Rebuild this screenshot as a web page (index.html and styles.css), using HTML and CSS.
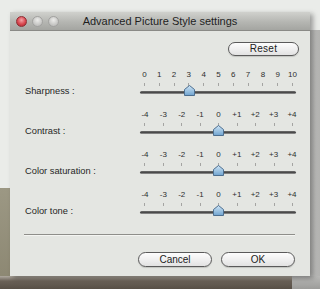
FILE: index.html
```html
<!DOCTYPE html>
<html>
<head>
<meta charset="utf-8">
<title>Advanced Picture Style settings</title>
<link rel="stylesheet" href="styles.css">
</head>
<body>
<div class="scene">
  <div class="window">
    <div class="titlebar">
      <div class="lights"><span class="light red"></span><span class="light"></span><span class="light"></span></div>
      <div class="title">Advanced Picture Style settings</div>
      <div></div>
    </div>
    <div class="top-row"><button class="btn reset">Reset</button></div>
    <div class="rows">
      <div class="row">
        <div class="label">Sharpness :</div>
        <div class="slider">
          <div class="nums"><span>0</span><span>1</span><span>2</span><span>3</span><span>4</span><span>5</span><span>6</span><span>7</span><span>8</span><span>9</span><span>10</span></div>
          <div class="ticks"><i></i><i></i><i></i><i></i><i></i><i></i><i></i><i></i><i></i><i></i><i></i></div>
          <div class="track"></div>
          <svg class="thumb" style="left:46.6px" viewBox="0 0 11 11"><defs><linearGradient id="g1" x1="0" y1="0" x2="0" y2="1"><stop offset="0" stop-color="#cfe6f6"/><stop offset="1" stop-color="#6fa3cf"/></linearGradient></defs><polygon points="5.5,0.5 10.5,4.5 10.5,10.5 0.5,10.5 0.5,4.5" fill="url(#g1)" stroke="#4d6f90" stroke-width="1"/></svg>
        </div>
      </div>
      <div class="row">
        <div class="label">Contrast :</div>
        <div class="slider">
          <div class="nums"><span>-4</span><span>-3</span><span>-2</span><span>-1</span><span>0</span><span>+1</span><span>+2</span><span>+3</span><span>+4</span></div>
          <div class="ticks"><i></i><i></i><i></i><i></i><i></i><i></i><i></i><i></i><i></i></div>
          <div class="track"></div>
          <svg class="thumb" style="left:76px" viewBox="0 0 11 11"><polygon points="5.5,0.5 10.5,4.5 10.5,10.5 0.5,10.5 0.5,4.5" fill="url(#g1)" stroke="#4d6f90" stroke-width="1"/></svg>
        </div>
      </div>
      <div class="row">
        <div class="label">Color saturation :</div>
        <div class="slider">
          <div class="nums"><span>-4</span><span>-3</span><span>-2</span><span>-1</span><span>0</span><span>+1</span><span>+2</span><span>+3</span><span>+4</span></div>
          <div class="ticks"><i></i><i></i><i></i><i></i><i></i><i></i><i></i><i></i><i></i></div>
          <div class="track"></div>
          <svg class="thumb" style="left:76px" viewBox="0 0 11 11"><polygon points="5.5,0.5 10.5,4.5 10.5,10.5 0.5,10.5 0.5,4.5" fill="url(#g1)" stroke="#4d6f90" stroke-width="1"/></svg>
        </div>
      </div>
      <div class="row">
        <div class="label">Color tone :</div>
        <div class="slider">
          <div class="nums"><span>-4</span><span>-3</span><span>-2</span><span>-1</span><span>0</span><span>+1</span><span>+2</span><span>+3</span><span>+4</span></div>
          <div class="ticks"><i></i><i></i><i></i><i></i><i></i><i></i><i></i><i></i><i></i></div>
          <div class="track"></div>
          <svg class="thumb" style="left:75.5px" viewBox="0 0 11 11"><polygon points="5.5,0.5 10.5,4.5 10.5,10.5 0.5,10.5 0.5,4.5" fill="url(#g1)" stroke="#4d6f90" stroke-width="1"/></svg>
        </div>
      </div>
    </div>
    <div class="sep"></div>
    <div class="actions"><button class="btn">Cancel</button><button class="btn">OK</button></div>
  </div>
</div>
</body>
</html>
```

FILE: styles.css
```css
html, body {
  margin: 0;
  padding: 0;
}
body {
  width: 320px;
  height: 289px;
  overflow: hidden;
  font-family: "Liberation Sans", Arial, sans-serif;
}
.scene {
  box-sizing: border-box;
  width: 320px;
  height: 289px;
  padding: 12px 0 0 10px;
  background:
    linear-gradient(#b0aaa0, #6a6157 5px, #574f46) 0 276px / 292px 13px no-repeat,
    linear-gradient(#b9b9b7, #9c9c9a) 292px 276px / 28px 13px no-repeat,
    linear-gradient(#9c9884, #8b8671) 0 188px / 10px 101px no-repeat,
    linear-gradient(to right, #c4c4c2, #b2b2b0) 310px 30px / 10px 259px no-repeat,
    #eaece9;
}
.window {
  width: 300px;
  height: 264px;
  background: #e4e6e2;
  display: flex;
  flex-direction: column;
  box-shadow: 3px 2px 5px rgba(0, 0, 0, 0.35);
}
.titlebar {
  box-sizing: border-box;
  height: 19px;
  border-bottom: 1px solid #8a8a86;
  background: linear-gradient(#d0d1cd, #b5b6b2 55%, #a4a5a1);
  display: grid;
  grid-template-columns: 1fr auto 1fr;
  align-items: center;
  padding: 0 6px;
}
.lights {
  display: flex;
  gap: 5px;
}
.light {
  box-sizing: border-box;
  width: 11px;
  height: 11px;
  border-radius: 50%;
  border: 1px solid #a2a2a0;
  background: radial-gradient(circle at 50% 35%, #ececea, #c8c8c6 60%, #b4b4b2);
}
.light.red {
  border-color: #8e2d33;
  background: radial-gradient(circle at 50% 35%, #f3a3a7, #d9474f 55%, #a3262d);
}
.title {
  font-size: 11px;
  color: #1e1e1e;
  white-space: nowrap;
}
.top-row {
  display: flex;
  justify-content: flex-end;
  padding: 11px 11px 0 0;
}
.btn {
  box-sizing: border-box;
  width: 74px;
  height: 15px;
  padding: 0;
  font-family: "Liberation Sans", Arial, sans-serif;
  font-size: 10px;
  line-height: 13px;
  color: #222;
  border: 1px solid #5a5a5a;
  border-radius: 8px;
  background: linear-gradient(#fdfdfd, #f0f0f0 50%, #e2e2e2);
  box-shadow: 0 1px 1px rgba(0, 0, 0, 0.15);
}
.btn.reset {
  width: 71px;
  height: 14px;
  line-height: 12px;
  letter-spacing: 0.3px;
}
.rows {
  margin-top: 14px;
  padding-left: 15px;
}
.row {
  display: grid;
  grid-template-columns: 112px 163px;
  height: 40px;
}
.label {
  font-size: 9.3px;
  line-height: 12px;
  margin-top: 15px;
  color: #262626;
  white-space: nowrap;
}
.slider {
  position: relative;
}
.nums {
  display: flex;
  justify-content: space-between;
  height: 10px;
  font-size: 8px;
  line-height: 10px;
  color: #2e2e2e;
}
.nums span {
  width: 16px;
  text-align: center;
}
.ticks {
  display: flex;
  justify-content: space-between;
  margin-top: 3px;
  height: 3px;
  padding: 0 7px;
}
.ticks i {
  width: 1px;
  background: #a4a4a2;
}
.track {
  margin: 5px 0 0 3px;
  width: 156px;
  height: 3px;
  border-radius: 1.5px;
  background: linear-gradient(#707070, #4a4a4a 50%, #9c9c9c);
}
.thumb {
  position: absolute;
  top: 15px;
  width: 11px;
  height: 11px;
}
.sep {
  margin: 4px 15px 0 14px;
  height: 1px;
  background: #8e8e8a;
  box-shadow: 0 1px 0 #f4f5f2;
}
.actions {
  display: flex;
  justify-content: flex-end;
  gap: 9px;
  padding: 17px 15px 0 0;
}
```
